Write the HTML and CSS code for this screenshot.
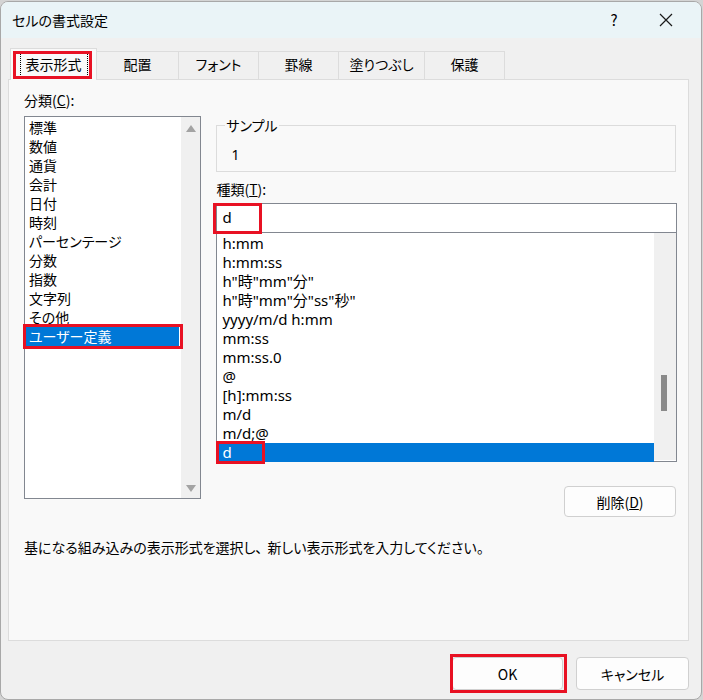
FILE: index.html
```html
<!DOCTYPE html>
<html lang="ja">
<head>
<meta charset="utf-8">
<link rel="stylesheet" href="styles.css">
</head>
<body>
<div class="window">
  <div class="titlebar">
    <span class="title">セルの書式設定</span>
    <span class="help">?</span>
    <span class="close"><svg width="14" height="14" viewBox="0 0 14 14"><path d="M1 1L13 13M13 1L1 13" stroke="#1a1a1a" stroke-width="1.2"/></svg></span>
  </div>
  <div class="tabs">
    <div class="tab active"><span class="focus">表示形式</span><span class="mark mark-tab"></span></div>
    <div class="tab t2">配置</div>
    <div class="tab t3">フォント</div>
    <div class="tab t4">罫線</div>
    <div class="tab t5">塗りつぶし</div>
    <div class="tab t6">保護</div>
  </div>
  <div class="panel">
    <div class="columns">
      <div class="leftcol">
        <div class="label">分類(<u>C</u>):</div>
        <div class="catlist">
          <div class="items">
            <div class="item">標準</div>
            <div class="item">数値</div>
            <div class="item">通貨</div>
            <div class="item">会計</div>
            <div class="item">日付</div>
            <div class="item">時刻</div>
            <div class="item">パーセンテージ</div>
            <div class="item">分数</div>
            <div class="item">指数</div>
            <div class="item">文字列</div>
            <div class="item">その他</div>
            <div class="item sel">ユーザー定義<span class="mark mark-cat"></span></div>
          </div>
          <div class="vscroll">
            <span class="arrow up"></span>
            <span class="arrow down"></span>
          </div>
        </div>
      </div>
      <div class="rightcol">
        <div class="sample">
          <span class="legend">サンプル</span>
          <span class="samplevalue">1</span>
        </div>
        <div class="label type-label">種類(<u>T</u>):</div>
        <div class="input">d<span class="mark mark-input"></span></div>
        <div class="fmtlist">
          <div class="fmtitems">
            <div class="fitem">h:mm</div>
            <div class="fitem">h:mm:ss</div>
            <div class="fitem">h"時"mm"分"</div>
            <div class="fitem">h"時"mm"分"ss"秒"</div>
            <div class="fitem">yyyy/m/d h:mm</div>
            <div class="fitem">mm:ss</div>
            <div class="fitem">mm:ss.0</div>
            <div class="fitem">@</div>
            <div class="fitem">[h]:mm:ss</div>
            <div class="fitem">m/d</div>
            <div class="fitem">m/d;@</div>
            <div class="fitem sel">d<span class="mark mark-fmt"></span></div>
          </div>
          <div class="fscroll"><span class="thumb"></span></div>
        </div>
        <div class="delrow"><button class="btn del">削除(<u>D</u>)</button></div>
      </div>
    </div>
    <div class="desc">基になる組み込みの表示形式を選択し、<span class="gap"></span>新しい表示形式を入力してください。</div>
  </div>
  <div class="footer">
    <button class="btn ok">OK<span class="mark mark-ok"></span></button>
    <button class="btn cancel">キャンセル</button>
  </div>
</div>
</body>
</html>
```

FILE: styles.css
```css
* { box-sizing: border-box; }
html, body { margin: 0; padding: 0; }
body {
  width: 703px;
  height: 700px;
  background: #d4d4d4;
  font-family: "Noto Sans CJK JP", "Noto Sans", sans-serif;
  font-size: 14px;
  font-feature-settings: "palt";
  color: #000;
  overflow: hidden;
  padding-top: 1px;
}
.window {
  width: 702px;
  height: 699px;
  background: #f0f0f0;
  border: 1px solid #a8a8a8;
  border-radius: 8px;
  overflow: hidden;
  display: flex;
  flex-direction: column;
}
.titlebar {
  height: 36px;
  background: #eaf4f7;
  display: flex;
  align-items: center;
  padding-left: 11px;
  padding-bottom: 1px;
  flex: none;
}
.title { font-size: 14px; flex: 1; }
.help { width: 20px; text-align: center; font-size: 15px; margin-right: 30px; }
.close { width: 24px; display: flex; justify-content: center; margin-right: 23px; }
.tabs {
  display: flex;
  height: 31px;
  margin-top: 10px;
  padding-left: 9px;
  align-items: flex-end;
  flex: none;
  position: relative;
  z-index: 2;
}
.tab {
  height: 28px;
  border: 1px solid #dcdcdc;
  border-bottom: none;
  background: #f0f0f0;
  display: flex;
  align-items: center;
  justify-content: center;
  margin-left: -1px;
  padding-bottom: 3px;
}
.tab.active {
  height: 32px;
  width: 87px;
  background: #f9f9f9;
  margin-left: 0;
  margin-bottom: -1px;
  position: relative;
  padding-top: 0;
  padding-bottom: 2px;
}
.focus {
  border: 1px dotted #000;
  padding: 2px 5px;
  line-height: 20px;
}
.t2 { width: 83px; }
.t3 { width: 81px; }
.t4 { width: 81px; }
.t5 { width: 87px; }
.t6 { width: 81px; }
.panel {
  margin: 0 12px 0 7px;
  height: 562px;
  background: #f9f9f9;
  border: 1px solid #dcdcdc;
  padding: 10px 11px 0 15px;
  flex: none;
}
.columns { display: flex; }
.label { line-height: 20px; height: 20px; }
.leftcol { width: 178px; }
.catlist {
  margin-top: 6px;
  height: 383px;
  border: 1px solid #828790;
  background: #fff;
  display: flex;
}
.items { flex: 1; padding-top: 1px; }
.item {
  height: 19px;
  line-height: 19px;
  padding-left: 4px;
  position: relative;
}
.item.sel {
  background: #0078d7;
  color: #fff;
  margin: 0 2px 0 1px;
  padding-left: 3px;
}
.vscroll {
  width: 19px;
  background: #f0f0f0;
  display: flex;
  flex-direction: column;
  justify-content: space-between;
  align-items: center;
  padding: 8px 0 6px;
}
.arrow { width: 0; height: 0; border-left: 5px solid transparent; border-right: 5px solid transparent; }
.arrow.up { border-bottom: 7px solid #a3a3a3; }
.arrow.down { border-top: 7px solid #a3a3a3; }
.rightcol {
  width: 462px;
  margin-left: 15px;
  padding-top: 35px;
}
.sample {
  height: 47px;
  border: 1px solid #dcdcdc;
  position: relative;
  margin-right: 1px;
}
.legend {
  position: absolute;
  left: 8px;
  top: -11px;
  background: #f9f9f9;
  line-height: 20px;
  padding: 0 1px;
}
.samplevalue {
  position: absolute;
  left: 14px;
  top: 19px;
  line-height: 20px;
  font-family: "Noto Sans", sans-serif;
}
.type-label { margin-top: 7px; }
.input {
  margin-top: 4px;
  height: 30px;
  border: 1px solid #828790;
  background: #fff;
  padding-left: 5px;
  line-height: 26px;
  position: relative;
  font-family: "Noto Sans", sans-serif;
  font-size: 15px;
}
.fmtlist {
  height: 229px;
  border: 1px solid #828790;
  border-top: none;
  background: #fff;
  display: flex;
}
.fmtitems { flex: 1; padding-top: 1px; }
.fitem {
  height: 19px;
  line-height: 19px;
  padding-left: 5px;
  position: relative;
  font-family: "Noto Sans", "Noto Sans CJK JP", sans-serif;
  font-size: 15px;
}
.fitem.sel {
  background: #0078d7;
  color: #fff;
  margin-left: 1px;
  padding-left: 4px;
}
.fscroll {
  width: 22px;
  background: #f0f0f0;
  position: relative;
  margin-bottom: 1px;
}
.thumb {
  position: absolute;
  left: 7px;
  top: 142px;
  width: 6px;
  height: 36px;
  background: #8a8a8a;
}
.delrow {
  display: flex;
  justify-content: flex-end;
  margin-top: 24px;
}
.btn {
  font-family: inherit;
  font-size: 14px;
  font-feature-settings: "palt";
  color: #000;
  background: #fdfdfd;
  border: 1px solid #d0d0d0;
  border-radius: 4px;
  height: 31px;
  padding: 0;
  position: relative;
}
.del { width: 112px; margin-right: 1px; }
.desc {
  margin-top: 20px;
  line-height: 20px;
}
.gap { display: inline-block; width: 5px; }
.footer {
  display: flex;
  justify-content: flex-end;
  padding: 16px 12px 0 0;
  gap: 13px;
}
.ok { width: 111px; height: 33px; }
.cancel { width: 113px; height: 33px; }
.mark {
  position: absolute;
  border: 3px solid #e81123;
  pointer-events: none;
}
.mark-tab { left: 2px; top: 2px; width: 79px; height: 28px; }
.mark-cat { left: -3px; top: -3px; width: 160px; height: 25px; }
.mark-input { left: -4px; top: -1px; width: 49px; height: 31px; }
.mark-fmt { left: -2px; top: -2px; width: 49px; height: 23px; }
.mark-ok { left: -3px; top: -4px; width: 117px; height: 39px; }
```
